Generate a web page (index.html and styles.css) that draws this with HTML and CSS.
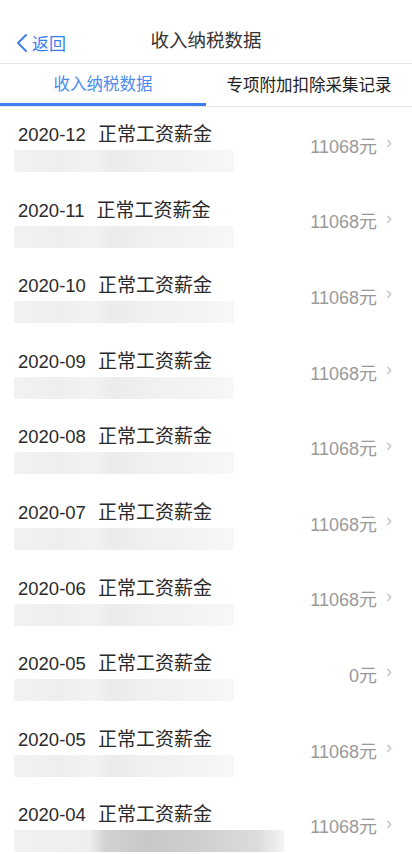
FILE: index.html
```html
<!DOCTYPE html>
<html lang="zh">
<head>
<meta charset="utf-8">
<link rel="stylesheet" href="styles.css">
</head>
<body>
<div class="nav">
  <div class="back">
    <svg class="back-icon" width="12" height="20" viewBox="0 0 12 20"><path d="M10 2 L2 10 L10 18" fill="none" stroke="#3b7ef0" stroke-width="2" stroke-linecap="round" stroke-linejoin="round"/></svg>
    <span>返回</span>
  </div>
  <div class="title">收入纳税数据</div>
</div>
<div class="tabs">
  <div class="tab active">收入纳税数据</div>
  <div class="tab">专项附加扣除采集记录</div>
</div>
<div class="list">
  <div class="row"><div class="left"><div class="name">2020-12<span class="kind">正常工资薪金</span></div><div class="blur"></div></div><div class="amt">11068元<span class="chev">›</span></div></div>
  <div class="row"><div class="left"><div class="name">2020-11<span class="kind">正常工资薪金</span></div><div class="blur"></div></div><div class="amt">11068元<span class="chev">›</span></div></div>
  <div class="row"><div class="left"><div class="name">2020-10<span class="kind">正常工资薪金</span></div><div class="blur"></div></div><div class="amt">11068元<span class="chev">›</span></div></div>
  <div class="row"><div class="left"><div class="name">2020-09<span class="kind">正常工资薪金</span></div><div class="blur"></div></div><div class="amt">11068元<span class="chev">›</span></div></div>
  <div class="row"><div class="left"><div class="name">2020-08<span class="kind">正常工资薪金</span></div><div class="blur"></div></div><div class="amt">11068元<span class="chev">›</span></div></div>
  <div class="row"><div class="left"><div class="name">2020-07<span class="kind">正常工资薪金</span></div><div class="blur"></div></div><div class="amt">11068元<span class="chev">›</span></div></div>
  <div class="row"><div class="left"><div class="name">2020-06<span class="kind">正常工资薪金</span></div><div class="blur"></div></div><div class="amt">11068元<span class="chev">›</span></div></div>
  <div class="row"><div class="left"><div class="name">2020-05<span class="kind">正常工资薪金</span></div><div class="blur"></div></div><div class="amt">0元<span class="chev">›</span></div></div>
  <div class="row"><div class="left"><div class="name">2020-05<span class="kind">正常工资薪金</span></div><div class="blur"></div></div><div class="amt">11068元<span class="chev">›</span></div></div>
  <div class="row"><div class="left"><div class="name">2020-04<span class="kind">正常工资薪金</span></div><div class="blur dark"></div></div><div class="amt">11068元<span class="chev">›</span></div></div>
</div>
</body>
</html>
```

FILE: styles.css
```css
* { box-sizing: border-box; }
html, body { margin: 0; padding: 0; background: #fff; }
body {
  width: 412px;
  height: 854px;
  overflow: hidden;
  font-family: "Helvetica Neue", "Liberation Sans", "Noto Sans CJK SC", sans-serif;
  color: #222;
}
.nav {
  height: 64px;
  position: relative;
  display: flex;
  align-items: center;
  justify-content: center;
  padding-top: 14px;
  border-bottom: 1px solid #e4e4e4;
}
.back {
  position: absolute;
  left: 16px;
  top: 30px;
  display: flex;
  align-items: center;
  gap: 4px;
  color: #3b7ef0;
  font-size: 17px;
  font-family: "Noto Sans CJK SC", sans-serif;
}
.back-icon { display: block; }
.title {
  font-size: 18.5px;
  color: #333;
  font-family: "Noto Sans CJK SC", sans-serif;
}
.tabs {
  display: flex;
  height: 43px;
  border-bottom: 1px solid #e6e6e6;
}
.tab {
  flex: 1;
  display: flex;
  align-items: center;
  justify-content: center;
  font-size: 16.5px;
  color: #222;
  font-family: "Noto Sans CJK SC", sans-serif;
  padding-bottom: 2px;
}
.tab.active {
  color: #4a8cf0;
  border-bottom: 3px solid #3b7ef0;
}
.list { display: flex; flex-direction: column; }
.row {
  height: 75.6px;
  display: flex;
  align-items: center;
  padding: 0 20px 0 14px;
}
.left {
  flex: 1;
  display: flex;
  flex-direction: column;
  align-self: flex-start;
  padding-top: 14px;
}
.name {
  padding-left: 4px;
  font-size: 18.5px;
  line-height: 24px;
  color: #2a2a2a;
  font-family: "Liberation Sans", "Noto Sans CJK SC", sans-serif;
}
.kind {
  margin-left: 12px;
  font-size: 19px;
  font-family: "Noto Sans CJK SC", sans-serif;
}
.blur {
  margin-top: 3px;
  width: 220px;
  height: 22px;
  background: linear-gradient(90deg, #f2f2f2 0, #eeeeee 20%, #f3f3f3 35%, #ebebeb 45%, #f0f0f0 60%, #f3f3f3 80%, #f7f7f7 100%);
  border-radius: 2px;
}
.blur.dark {
  width: 270px;
  background: linear-gradient(90deg, #f1f1f1 0, #eeeeee 28%, #d2d2d2 34%, #c8c8c8 50%, #d0d0d0 70%, #dcdcdc 90%, #f4f4f4 100%);
}
.amt {
  display: flex;
  align-items: center;
  font-size: 18px;
  color: #9a9a9a;
  font-family: "Liberation Sans", "Noto Sans CJK SC", sans-serif;
}
.chev {
  margin-left: 9px;
  font-size: 18px;
  color: #c4c4c4;
  position: relative;
  top: -2px;
}
```
